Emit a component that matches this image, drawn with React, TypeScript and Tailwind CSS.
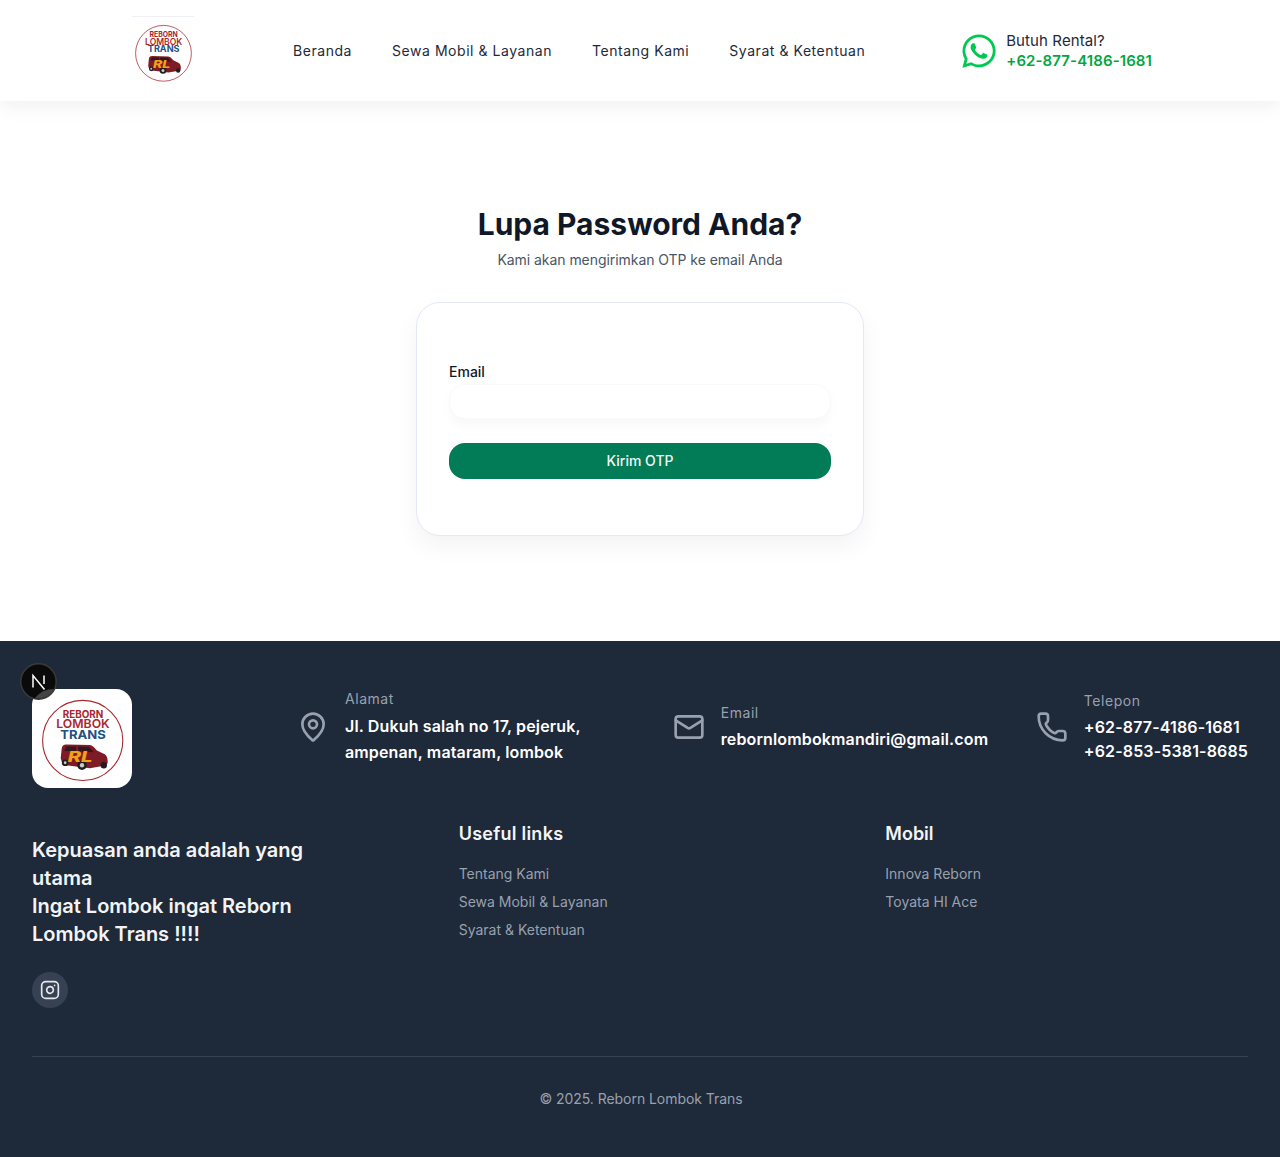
import { Mail, MapPin, Phone, Instagram } from 'lucide-react'
import { FaWhatsapp } from 'react-icons/fa'

function Logo({ viewBox, className }: { viewBox: string; className: string }) {
  return (
    <svg viewBox={viewBox} className={className}>
      <circle cx="50.7" cy="52" r="40.5" fill="#fff" stroke="#a8262e" strokeWidth="1.1" />
      <text x="51" y="29" textAnchor="middle" fontSize="10.5" fontWeight="700" fill="#a8262e" textLength="41" lengthAdjust="spacingAndGlyphs" fontFamily="Inter, sans-serif">REBORN</text>
      <text x="51" y="39.6" textAnchor="middle" fontSize="12.5" fontWeight="600" fill="#ab2630" textLength="54" lengthAdjust="spacingAndGlyphs" fontFamily="Inter, sans-serif">LOMBOK</text>
      <text x="51" y="50.5" textAnchor="middle" fontSize="12.5" fontWeight="700" fill="#23507f" textLength="46" lengthAdjust="spacingAndGlyphs" fontFamily="Inter, sans-serif">TRANS</text>
      {/* car */}
      <path d="M28.5 70 L29.5 60 Q30 56 34 56 L58 56.5 Q61 57 65 62 L73 66 Q76 68 76 74 L75 77 L58 80 L34 77 Q29 75 28.5 70 Z" fill="#7f1b26" />
      <path d="M34 58 L44 58 L44 62.5 L32 62.5 Z M46 58 L57 58.5 L62 64 L46 63 Z" fill="#35161d" />
      <circle cx="33" cy="74.5" r="3.4" fill="#1e1e1e" />
      <circle cx="33" cy="74.5" r="1.4" fill="#c9c9c9" />
      <circle cx="50" cy="77" r="4.8" fill="#1e1e1e" />
      <circle cx="50" cy="77" r="2.2" fill="#c9c9c9" />
      <circle cx="72" cy="77" r="3.2" fill="#1e1e1e" />
      <text x="48" y="74" textAnchor="middle" fontSize="15" fontWeight="800" fontStyle="italic" fill="#f0a216" textLength="25" lengthAdjust="spacingAndGlyphs" fontFamily="Inter, sans-serif">RL</text>
    </svg>
  )
}

function ContactItem({
  icon,
  label,
  lines,
  leading,
}: {
  icon: React.ReactNode
  label: string
  lines: string[]
  leading: string
}) {
  return (
    <div className="flex items-center gap-4">
      {icon}
      <div>
        <p className="text-sm leading-5 tracking-[0.55px] text-gray-400">{label}</p>
        <div className={`mt-1 text-base font-semibold tracking-[0.14px] text-white ${leading}`}>
          {lines.map((line) => (
            <p key={line}>{line}</p>
          ))}
        </div>
      </div>
    </div>
  )
}

export default function App() {
  return (
    <div className="bg-white font-['Inter',sans-serif]">
      {/* Header */}
      <header className="h-[101px] bg-white shadow-[0_4px_20px_rgba(15,23,42,0.07)] flex items-center pl-[132px] pr-[128px]">
        <div className="w-[62px] self-start mt-4 border-t border-[#eef0f6] pt-[6px]">
          <Logo viewBox="5 8 90 90" className="w-[62px] h-[62px]" />
        </div>
        <nav className="ml-[99px] flex gap-10 text-sm leading-6 tracking-[0.55px] text-gray-800">
          <a>Beranda</a>
          <a>Sewa Mobil &amp; Layanan</a>
          <a>Tentang Kami</a>
          <a>Syarat &amp; Ketentuan</a>
        </nav>
        <div className="ml-auto flex items-center gap-[10px]">
          <FaWhatsapp className="text-green-500 w-[34px] h-[38px]" />
          <div className="text-[15px] leading-5 tracking-[0.1px]">
            <p className="text-gray-800">Butuh Rental?</p>
            <p className="font-semibold text-green-600">+62-877-4186-1681</p>
          </div>
        </div>
      </header>

      {/* Form */}
      <main className="h-[540px] pt-[105px]">
        <h1 className="text-center text-3xl leading-9 font-bold text-gray-900">Lupa Password Anda?</h1>
        <p className="mt-2 text-center text-sm leading-5 tracking-[-0.05px] text-gray-600">Kami akan mengirimkan OTP ke email Anda</p>
        <div className="mx-auto mt-8 w-[448px] h-[234px] rounded-3xl border border-[#e5e9f5] bg-white px-8 pt-[59px] shadow-[0_10px_25px_rgba(15,23,42,0.05)]">
          <label className="block text-sm leading-5 font-medium text-gray-900">Email</label>
          <input
            type="email"
            className="mt-[2px] block w-full h-[35px] rounded-2xl border border-[#f8f9fc] bg-white shadow-[0_6px_12px_rgba(15,23,42,0.03)] outline-none"
          />
          <button className="mt-6 w-full h-9 rounded-2xl bg-[#027b57] text-sm font-medium text-[#f3f7f4]">Kirim OTP</button>
        </div>
      </main>

      {/* Footer */}
      <footer className="relative h-[516px] bg-gray-800 px-8 pt-12">
        {/* dev tools badge */}
        <div className="absolute left-5 top-[22px]">
          <svg viewBox="0 0 37 37" className="h-[37px] w-[37px]">
            <circle cx="18.5" cy="18.5" r="17.7" fill="#0a0a0a" stroke="#3a3a3a" strokeWidth="1.5" />
            <path d="M34 26 A17 17 0 0 1 15 35 Q22 26 34 26 Z" fill="#444" />
            <path d="M13 24.5V12.5l11.5 14M24 12.5v8.5" fill="none" stroke="#fff" strokeWidth="1.5" />
          </svg>
        </div>

        <div className="flex items-start">
          <div className="w-[100px] h-[99px] rounded-2xl bg-white">
            <Logo viewBox="0 0 100 100" className="w-[100px] h-[99px]" />
          </div>
          <div className="flex flex-1 h-[76px] items-center ml-[165px]">
            <ContactItem
              icon={<MapPin className="w-8 h-8 shrink-0 text-gray-400" />}
              label="Alamat"
              lines={['Jl. Dukuh salah no 17, pejeruk,', 'ampenan, mataram, lombok']}
              leading="leading-[26px]"
            />
            <div className="ml-[92px]">
              <ContactItem
                icon={<Mail className="w-8 h-8 shrink-0 text-gray-400" />}
                label="Email"
                lines={['rebornlombokmandiri@gmail.com']}
                leading="leading-6"
              />
            </div>
            <div className="ml-auto">
              <ContactItem
                icon={<Phone className="w-8 h-8 shrink-0 text-gray-400" />}
                label="Telepon"
                lines={['+62-877-4186-1681', '+62-853-5381-8685']}
                leading="leading-6"
              />
            </div>
          </div>
        </div>

        <div className="mt-8 grid grid-cols-3 gap-16">
          <div>
            <p className="mt-4 max-w-[300px] text-xl leading-7 font-semibold text-gray-100">
              Kepuasan anda adalah yang utama
              <br />
              Ingat Lombok ingat Reborn Lombok Trans !!!!
            </p>
            <div className="mt-6 flex h-9 w-9 items-center justify-center rounded-full bg-gray-700">
              <Instagram className="h-5 w-5 text-gray-200" />
            </div>
          </div>
          <div>
            <h3 className="text-lg leading-7 tracking-[0.25px] font-semibold text-gray-100">Useful links</h3>
            <ul className="mt-4 flex flex-col gap-2 text-sm leading-5 text-gray-400">
              <li>Tentang Kami</li>
              <li>Sewa Mobil &amp; Layanan</li>
              <li>Syarat &amp; Ketentuan</li>
            </ul>
          </div>
          <div>
            <h3 className="text-lg leading-7 font-semibold text-gray-100">Mobil</h3>
            <ul className="mt-4 flex flex-col gap-2 text-sm leading-5 text-gray-400">
              <li>Innova Reborn</li>
              <li>Toyata HI Ace</li>
            </ul>
          </div>
        </div>

        <div className="mt-12 border-t border-gray-700 pt-8 pl-[2px] text-center text-sm leading-5 tracking-[-0.05px] text-gray-400">
          © 2025. Reborn Lombok Trans
        </div>
      </footer>
    </div>
  )
}
